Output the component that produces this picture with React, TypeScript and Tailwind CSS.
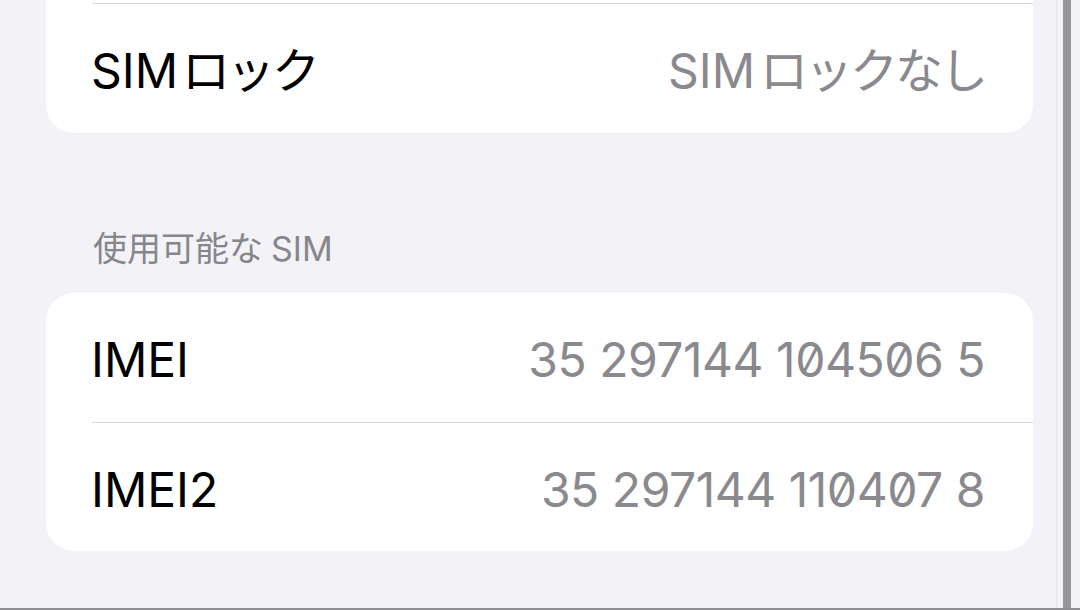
import React from "react";

type Row = { label: React.ReactNode; value: React.ReactNode; mono?: boolean };

const font = "font-['Inter','Noto_Sans_CJK_JP',sans-serif]";

const SettingRow = ({ label, value, mono }: Row) => (
  <div className="flex h-full items-center justify-between pl-[45px] pr-[48px] pt-[5px]">
    <span className="text-[48px] leading-none text-black">{label}</span>
    <span
      className={
        mono
          ? "text-[48px] leading-none text-[#8a8a8e] tracking-[-0.01em] slashed-zero"
          : "text-[48px] leading-none text-[#8a8a8e]"
      }
    >
      {value}
    </span>
  </div>
);

const Divider = () => <div className="ml-[46px] h-px bg-[#d6d6da]" />;

export default function App() {
  return (
    <div className={`flex h-[610px] w-[1080px] flex-col overflow-hidden bg-[#f2f2f7] ${font}`}>
      <div className="flex flex-1">
        {/* main list */}
        <div className="flex-1 pl-[46px]">
          {/* first group, its top is scrolled off */}
          <div className="rounded-b-[28px] bg-white">
            <div className="h-[3px]" />
            <Divider />
            <div className="h-[129px]">
              <SettingRow
                label={<>SIM<span className="ml-[4px] tracking-[-3px]">ロック</span></>}
                value={<>SIM<span className="ml-[5px] tracking-[-3px]">ロックなし</span></>}
              />
            </div>
          </div>

          {/* section header */}
          <div className="mt-[96px] mb-[24px] flex h-[40px] items-center pl-[47px] text-[34px] leading-none text-[#86868b]">
            <span>使用可能な</span>
            <span className="ml-[8px]">SIM</span>
          </div>

          <div className="rounded-[28px] bg-white">
            <div className="h-[129px]">
              <SettingRow label="IMEI" value="35 297144 104506 5" mono />
            </div>
            <Divider />
            <div className="h-[128px]">
              <SettingRow label="IMEI2" value="35 297144 110407 8" mono />
            </div>
          </div>
        </div>

        {/* right edge of the frame */}
        <div className="flex w-[47px]">
          <div className="w-[23px]" />
          <div className="w-px bg-[#e6e6eb]" />
          <div className="w-[6px]" />
          <div className="w-[8px] bg-[#96969b]" />
          <div className="flex-1" />
        </div>
      </div>
      <div className="h-[2px] bg-[#8e8e93]" />
    </div>
  );
}
